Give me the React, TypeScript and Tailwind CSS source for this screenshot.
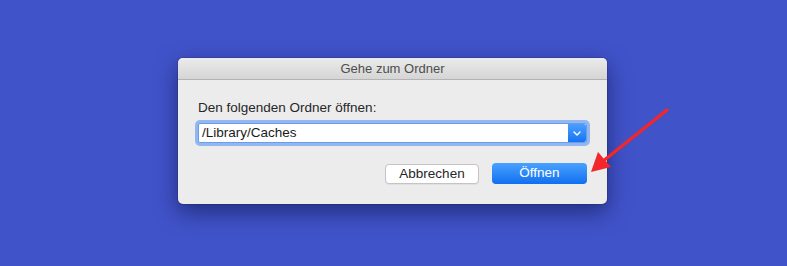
export default function App() {
  return (
    <div className="relative w-[787px] h-[266px] overflow-hidden bg-[#4153c9] font-['Liberation_Sans',Arial,sans-serif]">
      <div className="flex pt-[58px] pl-[178px]">
        <div className="w-[429px] h-[146px] rounded-[5px] overflow-hidden bg-[#ececec] shadow-[0_8px_22px_rgba(10,20,70,0.6),0_0_0_1px_rgba(40,50,120,0.35)] flex flex-col">
          <div className="h-[22px] shrink-0 border-b border-[#b3b3b3] bg-gradient-to-b from-[#ebebeb] to-[#d5d5d5] text-center text-[13px] leading-[21px] text-[#4d4d4d]">
            Gehe zum Ordner
          </div>
          <div className="flex flex-col pt-[20px] px-[17px]">
            <div className="pl-[3px] text-[13.5px] leading-[16px] text-[#262626]">Den folgenden Ordner öffnen:</div>
            <div className="mt-[4px] h-[26px] w-[395px] rounded-[5px] bg-[#93b8f1] p-[3px]">
              <div className="flex h-full rounded-[2px] border border-[#6a9de9] bg-white">
                <div className="flex-1 pl-[3px] text-[13.5px] leading-[18px] text-[#1a1a1a]">/Library/Caches</div>
                <div className="flex w-[18px] items-center justify-center rounded-r-[2px] bg-gradient-to-b from-[#4a9dff] to-[#1474f2]">
                  <svg width="8" height="5" viewBox="0 0 8 5">
                    <path d="M1 1 L4 4 L7 1" fill="none" stroke="white" strokeWidth="1.4" strokeLinecap="round" strokeLinejoin="round" />
                  </svg>
                </div>
              </div>
            </div>
            <div className="mt-[17px] flex justify-end gap-[13px] pr-[3px]">
              <div className="mt-[1px] flex h-[20px] w-[94px] items-center justify-center rounded-[4px] border border-[#c4c4c4] bg-white text-[13.5px] text-[#262626] shadow-[0_1px_0_rgba(0,0,0,0.05)]">
                Abbrechen
              </div>
              <div className="flex h-[21px] w-[95px] items-center justify-center rounded-[4px] bg-gradient-to-b from-[#48a1ff] to-[#0d6ff0] text-[13.5px] font-medium text-white">
                Öffnen
              </div>
            </div>
          </div>
        </div>
      </div>
      <svg className="absolute left-0 top-0" width="787" height="266" viewBox="0 0 787 266">
        <line x1="667" y1="110" x2="602" y2="162" stroke="#f2262b" strokeWidth="3.5" strokeLinecap="round" />
        <polygon points="591,172 598,152 611,167" fill="#f2262b" />
      </svg>
    </div>
  )
}
